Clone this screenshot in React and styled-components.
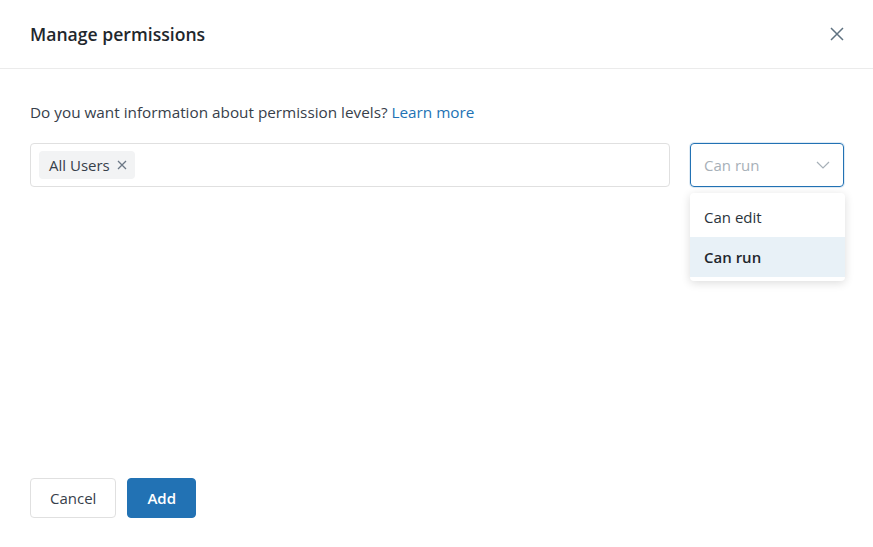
import styled, { createGlobalStyle } from "styled-components";

const Global = createGlobalStyle`
  html, body { margin: 0; padding: 0; background: #fff; }
  body { font-family: "Open Sans", "Noto Sans", sans-serif; color: #1f272d; }
  * { box-sizing: border-box; }
`;

const Dialog = styled.div`
  width: 873px;
  height: 547px;
  display: flex;
  flex-direction: column;
  background: #fff;
`;

const Header = styled.div`
  height: 69px;
  display: flex;
  align-items: center;
  justify-content: space-between;
  padding: 0 26px 0 30px;
  border-bottom: 1px solid #ebebeb;
`;

const Title = styled.h2`
  margin: 0;
  font-size: 17.6px;
  font-weight: 600;
  color: #1f272d;
`;

const CloseButton = styled.button`
  border: none;
  background: none;
  padding: 0;
  width: 20px;
  height: 20px;
  display: flex;
  align-items: center;
  justify-content: center;
  color: #5f7281;
  cursor: pointer;
`;

const Body = styled.div`
  flex: 1;
  padding: 32px 29px 0 30px;
  display: flex;
  flex-direction: column;
`;

const Info = styled.p`
  margin: 0 0 20px;
  font-size: 15.3px;
  color: #37404a;
  line-height: 22px;
`;

const Link = styled.a`
  color: #2272b4;
  text-decoration: none;
`;

const Row = styled.div`
  display: flex;
  gap: 20px;
  align-items: flex-start;
`;

const TagInput = styled.div`
  flex: 1;
  height: 44px;
  border: 1px solid #e0e0e0;
  border-radius: 4px;
  display: flex;
  align-items: center;
  padding: 0 8px;
`;

const Chip = styled.span`
  display: inline-flex;
  align-items: center;
  gap: 7px;
  height: 28px;
  padding: 0 8px 0 10px;
  background: #f2f3f4;
  border-radius: 4px;
  font-size: 15px;
  color: #37404a;
`;

const ChipX = styled.span`
  color: #6b7885;
  display: flex;
`;

const SelectWrap = styled.div`
  position: relative;
  width: 154px;
`;

const Select = styled.div`
  height: 44px;
  border: 1px solid #2272b4;
  border-radius: 4px;
  box-shadow: 0 0 0 1px rgba(34, 114, 180, 0.15);
  display: flex;
  align-items: center;
  justify-content: space-between;
  padding: 0 13px 0 13px;
  font-size: 15px;
  color: #a7b0b8;
`;

const Menu = styled.div`
  position: absolute;
  top: 50px;
  left: 0;
  right: -1px;
  background: #fff;
  border-radius: 4px;
  box-shadow: 0 2px 10px rgba(0, 0, 0, 0.14);
  padding: 4px 0;
`;

const Option = styled.div`
  height: 40px;
  display: flex;
  align-items: center;
  padding: 0 14px;
  font-size: 15px;
  color: ${(p) => (p.active ? "#1f272d" : "#2b333b")};
  font-weight: ${(p) => (p.active ? 600 : 400)};
  background: ${(p) => (p.active ? "#e8f1f7" : "transparent")};
`;

const Footer = styled.div`
  display: flex;
  gap: 11px;
  padding: 0 30px 29px;
`;

const Button = styled.button`
  height: 40px;
  padding: 0 19px;
  border-radius: 4px;
  font-family: inherit;
  font-size: 15px;
  font-weight: ${(p) => (p.primary ? 600 : 400)};
  border: 1px solid ${(p) => (p.primary ? "#2272b4" : "#e0e0e0")};
  background: ${(p) => (p.primary ? "#2272b4" : "#fff")};
  color: ${(p) => (p.primary ? "#fff" : "#37404a")};
  cursor: pointer;
`;

export default function App() {
  return (
    <>
      <Global />
      <Dialog>
        <Header>
          <Title>Manage permissions</Title>
          <CloseButton aria-label="Close">
            <svg width="16" height="16" viewBox="0 0 16 16" fill="none" stroke="currentColor" strokeWidth="1.5">
              <path d="M2 2L14 14M14 2L2 14" />
            </svg>
          </CloseButton>
        </Header>
        <Body>
          <Info>
            Do you want information about permission levels? <Link href="#">Learn more</Link>
          </Info>
          <Row>
            <TagInput>
              <Chip>
                All Users
                <ChipX>
                  <svg width="10" height="10" viewBox="0 0 10 10" fill="none" stroke="currentColor" strokeWidth="1.3">
                    <path d="M1 1L9 9M9 1L1 9" />
                  </svg>
                </ChipX>
              </Chip>
            </TagInput>
            <SelectWrap>
              <Select>
                Can run
                <svg width="14" height="8" viewBox="0 0 14 8" fill="none" stroke="#a7b0b8" strokeWidth="1.2">
                  <path d="M1 1L7 7L13 1" />
                </svg>
              </Select>
              <Menu>
                <Option>Can edit</Option>
                <Option active>Can run</Option>
              </Menu>
            </SelectWrap>
          </Row>
        </Body>
        <Footer>
          <Button>Cancel</Button>
          <Button primary>Add</Button>
        </Footer>
      </Dialog>
    </>
  );
}
